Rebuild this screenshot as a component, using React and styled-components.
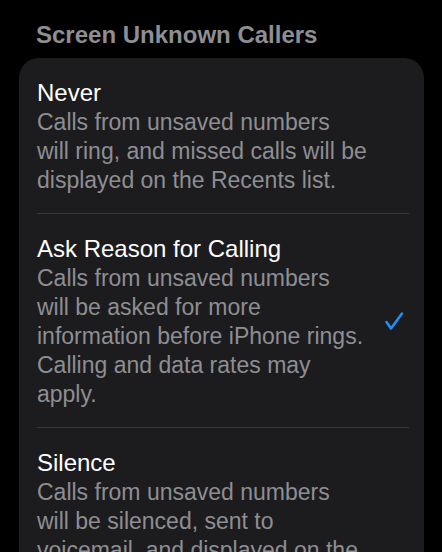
import React from "react";
import styled, { createGlobalStyle } from "styled-components";

const Global = createGlobalStyle`
  html, body {
    margin: 0;
    padding: 0;
    background: #000;
    overflow: hidden;
  }
  body {
    font-family: "Liberation Sans", Arial, sans-serif;
    -webkit-font-smoothing: antialiased;
  }
`;

const Page = styled.div`
  width: 442px;
  height: 552px;
  background: #000;
  box-sizing: border-box;
  padding: 21px 18px 0 19px;
  overflow: hidden;
`;

const Header = styled.h2`
  margin: 0 0 9px 17px;
  font-size: 24px;
  line-height: 28px;
  font-weight: 700;
  color: #8e8e93;
  white-space: nowrap;
`;

const Card = styled.div`
  background: #1c1c1e;
  border-radius: 20px;
  display: flex;
  flex-direction: column;
`;

const Row = styled.div`
  display: flex;
  align-items: center;
  padding: 19px 20px 18px 18px;
  gap: 12px;
`;

const Texts = styled.div`
  flex: 1;
  display: flex;
  flex-direction: column;
`;

const Title = styled.div`
  font-size: 24px;
  line-height: 31px;
  color: #fff;
  white-space: nowrap;
`;

const Desc = styled.div`
  font-size: 23px;
  line-height: 29px;
  color: #8e8e93;
  white-space: pre;
`;

const Separator = styled.div`
  height: 1px;
  background: #38383a;
  margin: 0 15px 0 18px;
`;

const Check = styled.svg`
  width: 20px;
  height: 20px;
  flex: none;
`;

const options = [
  {
    title: "Never",
    desc: "Calls from unsaved numbers\nwill ring, and missed calls will be\ndisplayed on the Recents list.",
  },
  {
    title: "Ask Reason for Calling",
    desc: "Calls from unsaved numbers\nwill be asked for more\ninformation before iPhone rings.\nCalling and data rates may\napply.",
    selected: true,
  },
  {
    title: "Silence",
    desc: "Calls from unsaved numbers\nwill be silenced, sent to\nvoicemail, and displayed on the\nRecents list.",
  },
];

export default function App() {
  return (
    <>
      <Global />
      <Page>
        <Header>Screen Unknown Callers</Header>
        <Card>
          {options.map((o, i) => (
            <React.Fragment key={o.title}>
              {i > 0 && <Separator />}
              <Row>
                <Texts>
                  <Title>{o.title}</Title>
                  <Desc>{o.desc}</Desc>
                </Texts>
                {o.selected && (
                  <Check viewBox="0 0 20 20">
                    <polyline
                      points="2.5,11 7,17.5 18,2.5"
                      fill="none"
                      stroke="#1f8ff3"
                      strokeWidth="2.6"
                      strokeLinecap="round"
                      strokeLinejoin="round"
                    />
                  </Check>
                )}
              </Row>
            </React.Fragment>
          ))}
        </Card>
      </Page>
    </>
  );
}
